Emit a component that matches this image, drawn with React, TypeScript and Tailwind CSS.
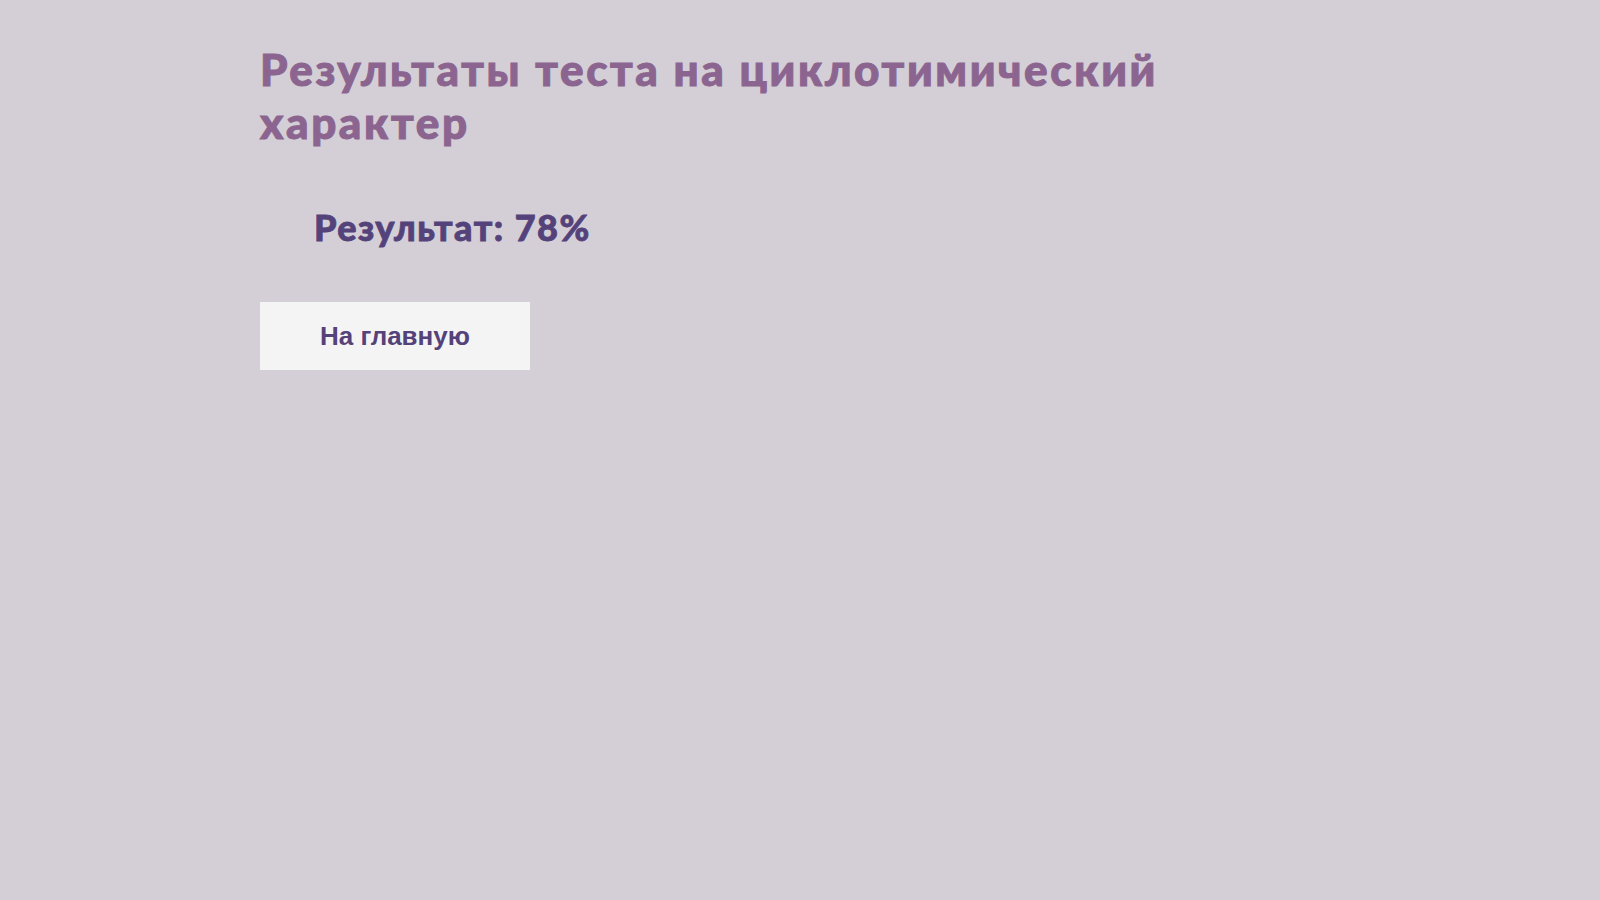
export default function App() {
  return (
    <div className="flex min-h-[900px] w-full flex-col items-start bg-[#d4cfd6] pl-[260px] pt-[43px] font-['Lato',sans-serif]">
      <h1 className="w-[960px] text-[44px] font-black leading-[53px] tracking-[2.6px] text-[#8b6590] [-webkit-text-stroke:1px_#8b6590]">
        Результаты теста на циклотимический характер
      </h1>
      <div className="mt-[56px] pl-[54px] text-[36px] font-black leading-[44px] tracking-[1.5px] text-[#54427a] [-webkit-text-stroke:0.8px_#54427a]">
        Результат: 78%
      </div>
      <button
        type="button"
        className="mt-[53px] h-[68px] w-[270px] bg-[#f4f4f4] font-['Liberation_Sans',Arial,sans-serif] text-[26px] font-bold text-[#54427a]"
      >
        На главную
      </button>
    </div>
  );
}
